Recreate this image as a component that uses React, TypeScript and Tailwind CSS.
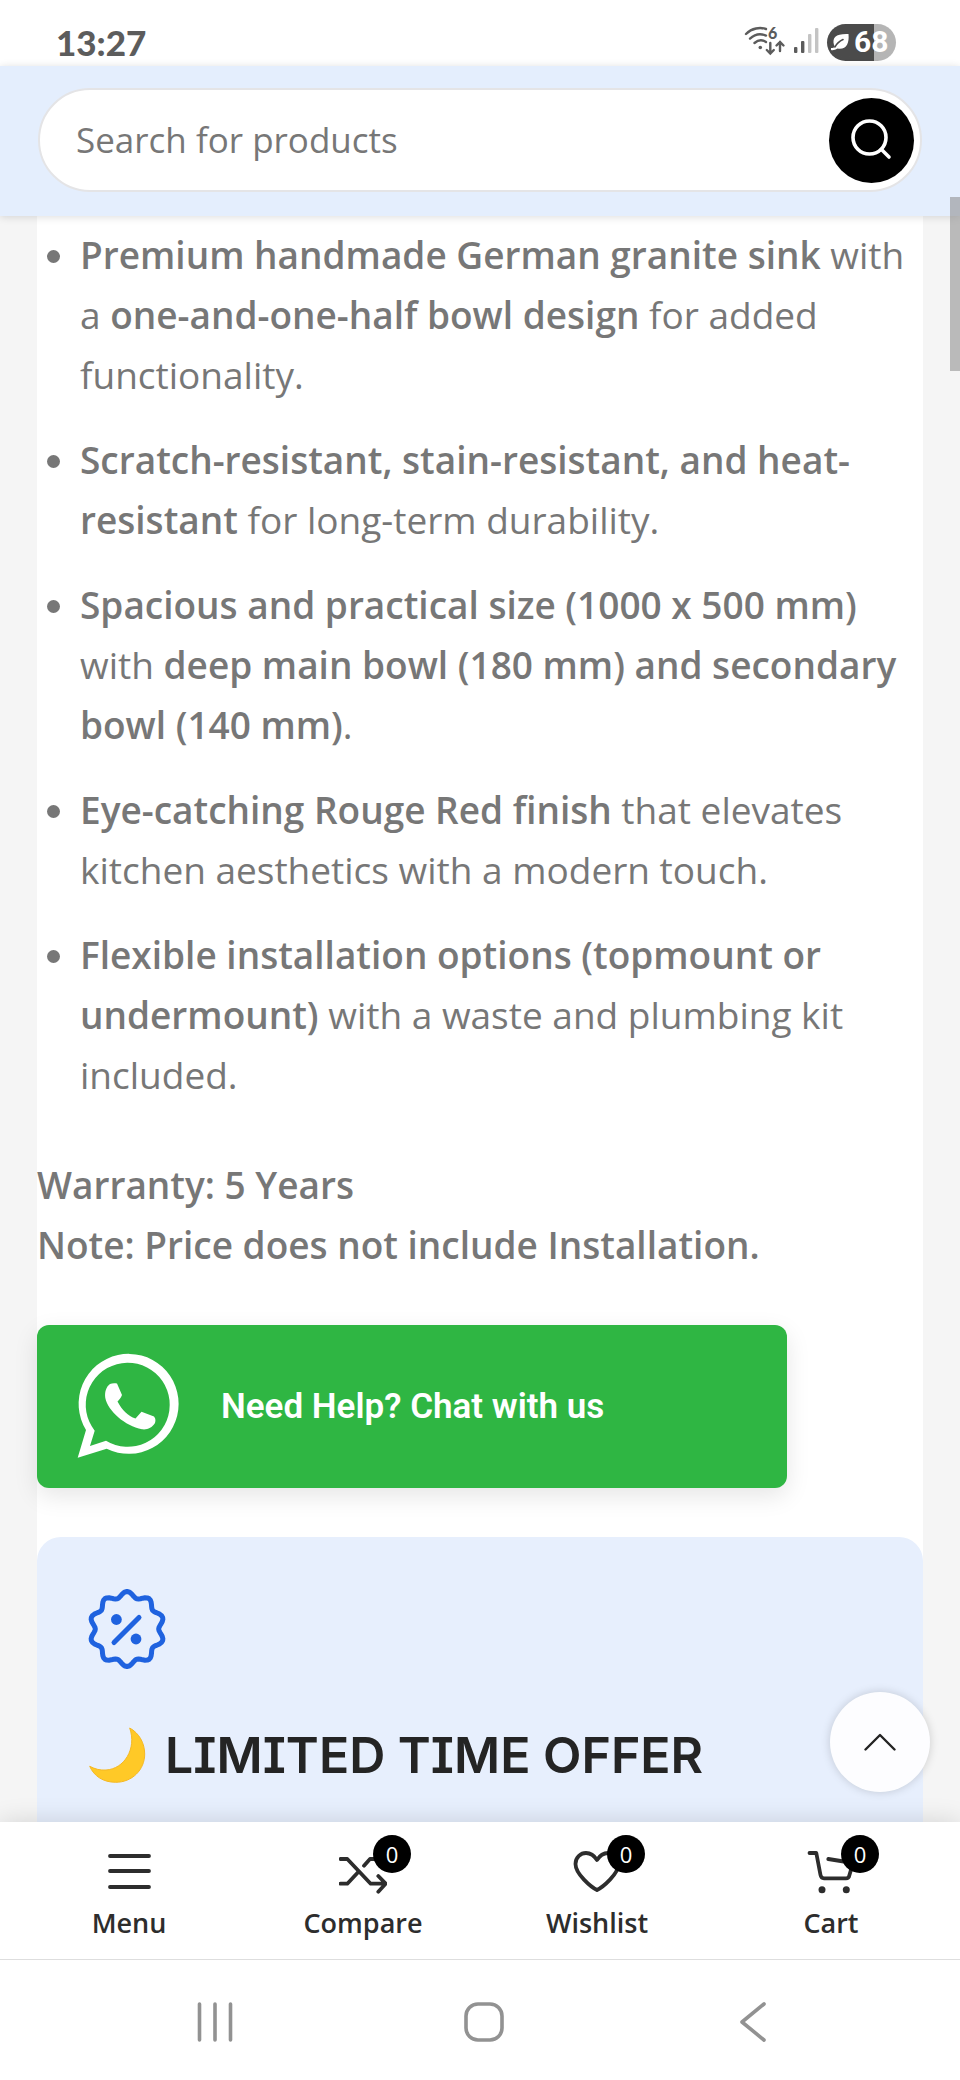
import type { ReactNode } from 'react';

const features = [
  <>
    <strong className="font-semibold">Premium handmade German granite sink</strong> with a{' '}
    <strong className="font-semibold">one-and-one-half bowl design</strong> for added functionality.
  </>,
  <>
    <strong className="font-semibold">Scratch-resistant, stain-resistant, and heat-resistant</strong> for long-term
    durability.
  </>,
  <>
    <strong className="font-semibold">Spacious and practical size (1000 x 500 mm)</strong> with{' '}
    <strong className="font-semibold">deep main bowl (180 mm) and secondary bowl (140 mm)</strong>.
  </>,
  <>
    <strong className="font-semibold">Eye-catching Rouge Red finish</strong> that elevates kitchen aesthetics with a
    modern touch.
  </>,
  <>
    <strong className="font-semibold">Flexible installation options (topmount or undermount)</strong> with a waste and
    plumbing kit included.
  </>,
];

// Scalloped outline with ten lobes, centred on 0,0
const sealPath =
  Array.from({ length: 120 }, (_, i) => {
    const angle = (i / 120) * Math.PI * 2;
    const r = 34.6 + 2.9 * Math.cos(angle * 10);
    return `${i === 0 ? 'M' : 'L'}${(r * Math.sin(angle)).toFixed(2)} ${(-r * Math.cos(angle)).toFixed(2)}`;
  }).join('') + 'Z';

const StatusBar = () => (
  <div className="flex h-[66px] items-center justify-between bg-white pt-[18px] pr-16 pl-14 text-[#5c5c5c]">
    <span className="font-['Lato',sans-serif] text-[35px] leading-9 font-black">13:27</span>
    <div className="flex items-center gap-2">
      <svg className="overflow-visible" width="42" height="32" viewBox="0 0 42 32" fill="none" stroke="currentColor" strokeWidth="2.4" strokeLinecap="round" aria-hidden="true">
        <path d="M2 8C8 2 16 1 22 3" />
        <path d="M6 12.6C11 8 17 7.4 22 9.6" />
        <path d="M10.5 17C14 14 18.5 13.6 22 16" />
        <circle cx="16.3" cy="21.5" r="1.8" fill="currentColor" stroke="none" />
        <path d="M26.3 17V27M22.8 24L26.3 27.5L29.8 24M36 25V16M32.5 19.5L36 16L39.5 19.5" />
        <text x="24" y="13" fontSize="16" fontWeight="900" fontFamily="Lato, sans-serif" fill="currentColor" stroke="none">6</text>
      </svg>
      <svg width="25" height="32" viewBox="0 0 25 32" aria-hidden="true">
        <rect x="0" y="21" width="3.4" height="6" rx="1" fill="#5c5c5c" />
        <rect x="7" y="15" width="3.4" height="12" rx="1" fill="#5c5c5c" />
        <rect x="14" y="8" width="3.4" height="19" rx="1" fill="#c4c4c4" />
        <rect x="21" y="2" width="3.4" height="25" rx="1" fill="#c4c4c4" />
      </svg>
      <div className="flex h-[37px] w-[69px] items-center gap-1 rounded-full bg-linear-to-r from-[#4b4b4b] from-68% to-[#b5b5b5] to-68% pl-[3px] text-white">
        <svg width="20" height="20" viewBox="0 0 20 20" aria-hidden="true">
          <path d="M4 13C2 5 6 1.5 18.5 2C19.5 12 16 18 7.5 16.5C5 18 3 18.5 1 18L1 16C3 16 4 15.5 5 14.5Z" fill="currentColor" />
          <path d="M5 15C7 11 9.5 9 13 7.5" fill="none" stroke="#4b4b4b" strokeWidth="1.6" strokeLinecap="round" />
        </svg>
        <span className="font-['Roboto',sans-serif] text-[30px] leading-9 font-bold">68</span>
      </div>
    </div>
  </div>
);

const SearchHeader = () => (
  <header className="relative z-10 bg-[#e4eefd] px-[38px] pt-[22px] pb-6 shadow-[0_1px_8px_rgba(0,0,0,0.14)]">
    <form
      role="search"
      onSubmit={(e) => e.preventDefault()}
      className="flex h-[104px] items-center rounded-full border-2 border-[#e4e4e6] bg-white pr-1.5 pl-9"
    >
      <input
        type="search"
        aria-label="Search for products"
        placeholder="Search for products"
        className="min-w-0 flex-1 bg-transparent text-[35px] leading-12 text-[#777] outline-none placeholder:text-[#777]"
      />
      <button type="submit" aria-label="Search" className="size-[85px] shrink-0 rounded-full bg-black text-white">
        <svg className="size-full" viewBox="0 0 85 85" fill="none" stroke="currentColor" strokeWidth="3.6" strokeLinecap="round" aria-hidden="true">
          <circle cx="40.5" cy="39.5" r="16.5" />
          <path d="M52.5 51.5L60 59" />
        </svg>
      </button>
    </form>
    <div className="absolute top-[131px] right-0 h-[174px] w-2.5 bg-[#888]/55" />
  </header>
);

const WhatsAppIcon = () => (
  <svg className="overflow-visible" width="104" height="104" viewBox="0 0 104 104" fill="currentColor" aria-hidden="true">
    <path
      fillRule="evenodd"
      d="M.7 102.7L9 75A50 50 0 1 1 29.7 93.8ZM17.7 75.7L13 91L29 85.7A42 42 0 1 0 17.7 75.7Z"
    />
    <path d="M33 29C35 28 38 28 40 28.5L45 40C44 43 42 45 40.5 46.5C45 55 51 61 58.5 63.5L64.5 56.8L77 61.5C79 64 78.5 66 78 68C75 73 70 75 65 74.3C48 71 31 56 28.3 43C27.5 37 29 32 33 29Z" />
  </svg>
);

const OfferCard = () => (
  <section className="mt-[49px] flex-1 rounded-t-3xl bg-[#e7effd] px-[50px] pt-[52px]">
    <svg width="80" height="80" viewBox="-40 -40 80 80" fill="none" stroke="#1f62df" strokeWidth="5" strokeLinecap="round" strokeLinejoin="round" aria-hidden="true">
      <path d={sealPath} />
      <path d="M-13 13.5L12 -11.5" />
      <circle cx="-10.6" cy="-9.5" r="5.4" fill="#1f62df" stroke="none" />
      <circle cx="9" cy="10" r="5.4" fill="#1f62df" stroke="none" />
    </svg>
    <h2 className="mt-[50px] flex items-center gap-[18px] font-['Inter',sans-serif] text-[50px] leading-[72px] font-semibold text-[#242424] [font-feature-settings:'cv08']">
      <svg width="60" height="72" viewBox="0 0 60 72" role="img" aria-label="Crescent moon">
        <path
          d="M42.7 9C52 14 57.7 24 57.7 35C57.7 51 45 63.3 28.7 63.3C16 63.3 7 57 2.7 47.3C8 50 13 51.5 19 51C37 50 50 30 42.7 9Z"
          fill="#ffc927"
          stroke="#f5b823"
          strokeWidth="1"
        />
      </svg>
      LIMITED TIME OFFER
    </h2>
  </section>
);

const icons: Record<string, ReactNode> = {
  menu: <path d="M5 9H44M5 24H44M5 40H44" />,
  compare: (
    <>
      <path d="M1.5 12H8.3L31.7 36.7H46M39.3 29L46.7 36.7L39.3 44.7" />
      <path d="M1.5 36.7H8.3L19.3 25M25 18.7L31 12H46" />
    </>
  ),
  wishlist: (
    <path d="M24 43C18 40 2.5 27 2.5 17C2.5 10 8 6 13 6C18 6 21.5 9 24 13C26.5 9 30 6 35 6C40 6 45.5 10 45.5 17C45.5 27 30 40 24 43Z" />
  ),
  cart: (
    <>
      <path d="M2.5 6H9.3L13.5 28C14 30.5 15 31.3 17 31.3H39C41 31.3 42 30.5 42.3 28.5L46 16L21.3 12" />
      <circle cx="15" cy="42.7" r="3.5" fill="currentColor" stroke="none" />
      <circle cx="39.3" cy="42.7" r="3.5" fill="currentColor" stroke="none" />
    </>
  ),
};

const navItems = [
  { icon: 'menu', label: 'Menu' },
  { icon: 'compare', label: 'Compare', count: 0 },
  { icon: 'wishlist', label: 'Wishlist', count: 0 },
  { icon: 'cart', label: 'Cart', count: 0 },
];

const BottomNav = () => (
  <nav className="relative z-10 bg-white px-3 pt-[25px] pb-[18px] shadow-[0_0_24px_rgba(0,0,0,0.14)]">
    <div className="grid grid-cols-4">
      {navItems.map((item) => (
        <a key={item.label} href={`#${item.icon}`} className="flex flex-col items-center gap-2.5 text-[#2d2d2d]">
          <span className="relative">
            <svg width="48" height="48" viewBox="0 0 48 48" fill="none" stroke="currentColor" strokeWidth="3.8" strokeLinecap="round" strokeLinejoin="round" aria-hidden="true">
              {icons[item.icon]}
            </svg>
            {item.count !== undefined && (
              <span className="absolute -top-3 left-[34px] flex size-[38px] items-center justify-center rounded-full bg-black text-[22px] leading-none text-white">
                {item.count}
              </span>
            )}
          </span>
          <span className="text-[27px] leading-9 font-semibold">{item.label}</span>
        </a>
      ))}
    </div>
    <button
      type="button"
      aria-label="Scroll to top"
      className="absolute -top-[130px] right-[30px] flex size-[100px] items-center justify-center rounded-full bg-[#fdfdff] text-[#242424] shadow-[0_0_10px_rgba(0,0,0,0.17)]"
    >
      <svg width="32" height="18" viewBox="0 0 32 18" fill="none" stroke="currentColor" strokeWidth="2.4" strokeLinecap="round" strokeLinejoin="round" aria-hidden="true">
        <path d="M1.5 16.5L16 2L30.5 16.5" />
      </svg>
    </button>
  </nav>
);

const systemButtons = [
  { label: 'Recent apps', path: <path d="M4.5 3V39M20 3V39M35.5 3V39" /> },
  { label: 'Home', path: <rect x="2" y="3" width="36" height="36" rx="12" /> },
  { label: 'Back', path: <path d="M31 3L9 21L31 39" /> },
];

const SystemBar = () => (
  <div className="relative z-20 grid h-[121px] grid-cols-3 border-t border-[#dedede] bg-white pr-[72px] pl-20">
    {systemButtons.map((button) => (
      <button key={button.label} type="button" aria-label={button.label} className="flex items-center justify-center pt-1 text-[#929292]">
        <svg width="40" height="42" viewBox="0 0 40 42" fill="none" stroke="currentColor" strokeWidth="3.6" strokeLinecap="round" strokeLinejoin="round" aria-hidden="true">
          {button.path}
        </svg>
      </button>
    ))}
  </div>
);

export default function App() {
  return (
    <div className="flex min-h-screen flex-col bg-[#f5f5f5] font-['Open_Sans','Noto_Sans',sans-serif]">
      <StatusBar />
      <SearchHeader />
      <main className="mx-[37px] flex flex-1 flex-col bg-white pt-[9px] text-[37px] leading-[60px] text-[#777]">
        <ul className="flex list-disc flex-col gap-[25px] pl-[43px]">
          {features.map((feature, i) => (
            <li key={i}>{feature}</li>
          ))}
        </ul>
        <p className="mt-[50px] font-semibold">
          Warranty: 5 Years
          <br />
          Note: Price does not include Installation.
        </p>
        <a
          href="#whatsapp"
          className="mt-[50px] flex h-[163px] w-[750px] max-w-full items-center gap-10 rounded-xl bg-[#2fb643] pl-10 font-['Roboto',sans-serif] text-[35px] leading-10 font-semibold text-white shadow-[0_8px_24px_rgba(0,0,0,0.1)]"
        >
          <WhatsAppIcon />
          Need Help? Chat with us
        </a>
        <OfferCard />
      </main>
      <BottomNav />
      <SystemBar />
    </div>
  );
}
